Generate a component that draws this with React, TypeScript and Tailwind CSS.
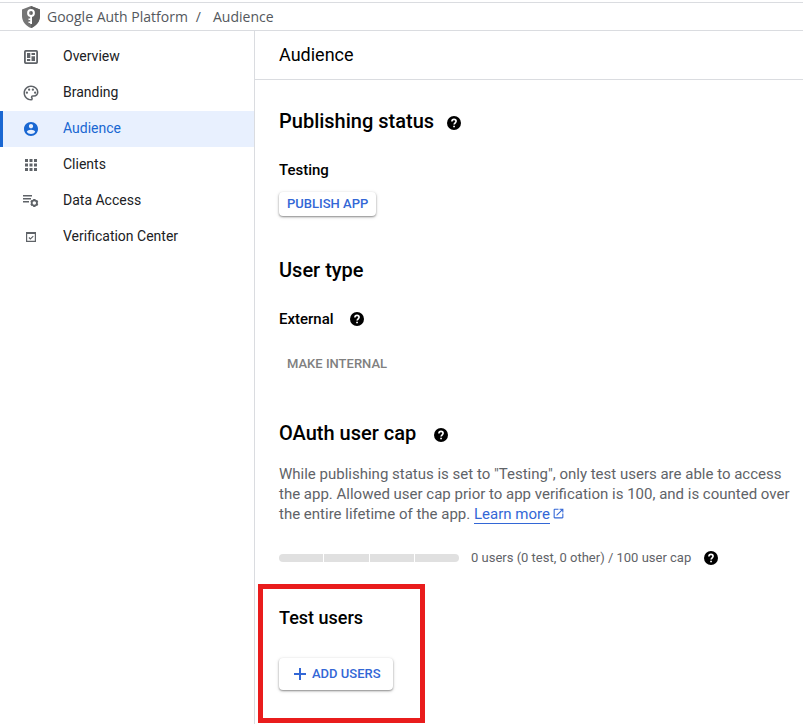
import type { ReactNode } from 'react';
import { MdApps, MdOpenInNew, MdOutlinePalette } from 'react-icons/md';

function ShieldKeyIcon() {
  return (
    <svg width="20" height="22" viewBox="0 0 20 22" aria-hidden="true">
      <path d="M10 0 19 3.4V10c0 5.4-3.7 10-9 12-5.3-2-9-6.6-9-12V3.4z" fill="#757575" />
      <path d="M10 0 19 3.4V10c0 5.4-3.7 10-9 12z" fill="#616161" />
      <circle cx="10" cy="7" r="2.9" fill="none" stroke="#fff" strokeWidth="2" />
      <path d="M9.2 9.5h1.8v8.500H9.200zM7.500 12.500h2v1.500h-2zM7.500 15.500h2V17h-2z" fill="#fff" />
    </svg>
  );
}

function OverviewIcon() {
  return (
    <svg width="14" height="14" viewBox="0 0 14 14" aria-hidden="true">
      <rect x="0.9" y="0.9" width="12.2" height="12.2" rx="0.8" fill="none" stroke="currentColor" strokeWidth="1.8" />
      <path d="M3 3h3.300v5H3zM7.500 3H11v2H7.500zM7.500 6.200H11V11H7.500zM3 9h3.300v2H3z" fill="currentColor" />
    </svg>
  );
}

function AccountIcon() {
  return (
    <svg width="14" height="14" viewBox="2 2 20 20" aria-hidden="true">
      <path
        d="M12 2C6.480 2 2 6.480 2 12s4.480 10 10 10 10-4.480 10-10S17.520 2 12 2zm0 3c1.660 0 3 1.340 3 3s-1.340 3-3 3-3-1.340-3-3 1.340-3 3-3zm0 14.200c-2.500 0-4.710-1.280-6-3.220.030-1.990 4-3.080 6-3.080 1.990 0 5.970 1.090 6 3.080-1.290 1.940-3.500 3.220-6 3.220z"
        fill="currentColor"
      />
    </svg>
  );
}

function DataAccessIcon() {
  return (
    <svg width="16" height="14" viewBox="0 0 16 14" aria-hidden="true">
      <path d="M0 1h9v1.500H0zM0 4h8v1.500H0zM0 7h6v1.500H0z" fill="currentColor" />
      <circle cx="11.3" cy="9" r="2.6" fill="none" stroke="currentColor" strokeWidth="1.7" />
      <path
        d="M11.300 5v1.500M11.300 11.500V13M7.840 7l1.300.750M13.460 10.250l1.300.750M7.840 11l1.300-.750M13.460 7.750l1.300-.750"
        stroke="currentColor"
        strokeWidth="2.2"
      />
    </svg>
  );
}

function VerificationIcon() {
  return (
    <svg width="10" height="10" viewBox="0 0 10 10" aria-hidden="true">
      <path d="M.6 1.400h8.800v8H.6z" fill="none" stroke="currentColor" strokeWidth="1.2" />
      <path d="M0 0h10v2H0z" fill="currentColor" />
      <path d="m2.900 5.500 1.500 1.500L7.300 4.200" fill="none" stroke="currentColor" strokeWidth="1.1" />
    </svg>
  );
}

function HelpIcon() {
  return (
    <svg width="14" height="14" viewBox="0 0 14 14" aria-hidden="true">
      <circle cx="7" cy="7" r="7" fill="currentColor" />
      <path
        d="M4.900 5.500C4.900 4.200 5.800 3.400 7 3.400s2.100.8 2.100 1.900C9.100 6.700 7.100 6.900 7.100 8.600"
        fill="none"
        stroke="#fff"
        strokeWidth="1.6"
      />
      <path d="M6.200 9.700h1.700v1.600H6.200z" fill="#fff" />
    </svg>
  );
}

function PlusIcon() {
  return (
    <svg width="12" height="12" viewBox="0 0 12 12" aria-hidden="true">
      <path d="M5 0h2v5h5v2H7v5H5V7H0V5h5z" fill="currentColor" />
    </svg>
  );
}

const navItems: { label: string; icon: ReactNode }[] = [
  { label: 'Overview', icon: <OverviewIcon /> },
  { label: 'Branding', icon: <MdOutlinePalette size={18} /> },
  { label: 'Audience', icon: <AccountIcon /> },
  { label: 'Clients', icon: <MdApps size={18} /> },
  { label: 'Data Access', icon: <DataAccessIcon /> },
  { label: 'Verification Center', icon: <VerificationIcon /> },
];

function HelpButton({ label }: { label: string }) {
  return (
    <button type="button" aria-label={label} className="flex text-black">
      <HelpIcon />
    </button>
  );
}

export default function App() {
  return (
    <div className="flex min-h-screen flex-col bg-white pt-0.5 font-[Roboto,sans-serif] text-black">
      <header className="flex h-[29px] items-center border-y border-[#dadce0] pl-[21px] text-[#5f6368]">
        <ShieldKeyIcon />
        <nav
          aria-label="Breadcrumb"
          className="ml-1.5 flex font-['Open_Sans',sans-serif] text-sm font-medium text-[#54585d]"
        >
          <a href="#platform">Google Auth Platform</a>
          <span className="mr-3 ml-2">/</span>
          <span>Audience</span>
        </nav>
      </header>

      <div className="flex flex-1">
        <aside className="w-[255px] shrink-0 border-r border-[#dadce0] pt-2">
          <nav aria-label="Google Auth Platform">
            {navItems.map(({ label, icon }) => {
              const active = label === 'Audience';
              return (
                <a
                  key={label}
                  href="#section"
                  aria-current={active ? 'page' : undefined}
                  className={
                    active
                      ? 'flex h-9 items-center border-l-3 border-[#1967d2] bg-[#e8f0fe] pb-0.5 pl-[18px] text-sm text-[#1967d2]'
                      : 'flex h-9 items-center border-l-3 border-transparent pb-0.5 pl-[18px] text-sm text-[#202124]'
                  }
                >
                  <span className={active ? 'flex w-5 justify-center pt-0.5' : 'flex w-5 justify-center pt-0.5 text-[#5f6368]'}>
                    {icon}
                  </span>
                  <span className="ml-[22px]">{label}</span>
                </a>
              );
            })}
          </nav>
        </aside>

        <main className="min-w-0 flex-1">
          <div className="flex h-[49px] items-center border-b border-[#dadce0] px-6">
            <h1 className="text-lg">Audience</h1>
          </div>

          <div className="pr-3 pl-6">
            <section className="pt-[27px]">
              <div className="flex items-center gap-[13px]">
                <h2 className="text-xl leading-7 font-medium">Publishing status</h2>
                <span className="pt-1">
                  <HelpButton label="About publishing status" />
                </span>
              </div>
              <h3 className="mt-[25px] text-[15px] leading-5 font-medium">Testing</h3>
              <button
                type="button"
                className="mt-3 flex h-6 items-center rounded-sm bg-white px-2 text-[13px] font-medium text-[#3367d6] shadow-[0_1px_2px_rgba(0,0,0,0.4),0_1px_4px_rgba(0,0,0,0.12)]"
              >
                PUBLISH APP
              </button>
            </section>

            <section className="pt-10">
              <h2 className="text-xl leading-7 font-medium">User type</h2>
              <div className="mt-[25px] flex items-center gap-4">
                <h3 className="text-[15px] leading-5 font-medium">External</h3>
                <HelpButton label="About user type" />
              </div>
              <button
                type="button"
                disabled
                className="mt-[23px] flex h-6 items-center px-2 text-[13px] font-medium text-[#808080]"
              >
                MAKE INTERNAL
              </button>
            </section>

            <section className="pt-[43px]">
              <div className="flex items-center gap-[18px]">
                <h2 className="text-xl leading-7 font-medium">OAuth user cap</h2>
                <span className="pt-1">
                  <HelpButton label="About the user cap" />
                </span>
              </div>
              <p className="mt-[17px] text-[15px] leading-5 text-[#5f6368]">
                While publishing status is set to "Testing", only test users are able to access the app. Allowed user
                cap prior to app verification is 100, and is counted over the entire lifetime of the app.{' '}
                <a href="#learn" className="border-b border-[#3367d6] text-[#3367d6]">
                  Learn more
                </a>
                <MdOpenInNew size={13} className="ml-0.5 inline-block align-[-1px] text-[#3367d6]" />
              </p>
              <div className="mt-6 flex items-center">
                <div
                  role="progressbar"
                  aria-label="User cap"
                  aria-valuenow={0}
                  aria-valuemax={100}
                  className="grid h-2 w-[180px] grid-cols-4 gap-px overflow-hidden rounded-sm"
                >
                  <span className="bg-[#e0e0e0]" />
                  <span className="bg-[#e0e0e0]" />
                  <span className="bg-[#e0e0e0]" />
                  <span className="bg-[#e0e0e0]" />
                </div>
                <span className="mr-[13px] ml-3 text-[13px] leading-5 text-[#5f6368]">
                  0 users (0 test, 0 other) / 100 user cap
                </span>
                <HelpButton label="About the user count" />
              </div>
            </section>
          </div>

          <section className="mt-4 ml-[3px] w-[167px] border-5 border-[#e91c1c] px-4 pt-[15px] pb-7">
            <h2 className="text-lg font-medium">Test users</h2>
            <button
              type="button"
              className="mt-[26px] flex h-8 items-center gap-1.5 rounded-sm bg-white pr-3 pl-[15px] text-[13px] font-medium whitespace-nowrap text-[#3367d6] shadow-[0_1px_2px_rgba(0,0,0,0.4),0_1px_4px_rgba(0,0,0,0.12)]"
            >
              <PlusIcon />
              ADD USERS
            </button>
          </section>
        </main>
      </div>
    </div>
  );
}
